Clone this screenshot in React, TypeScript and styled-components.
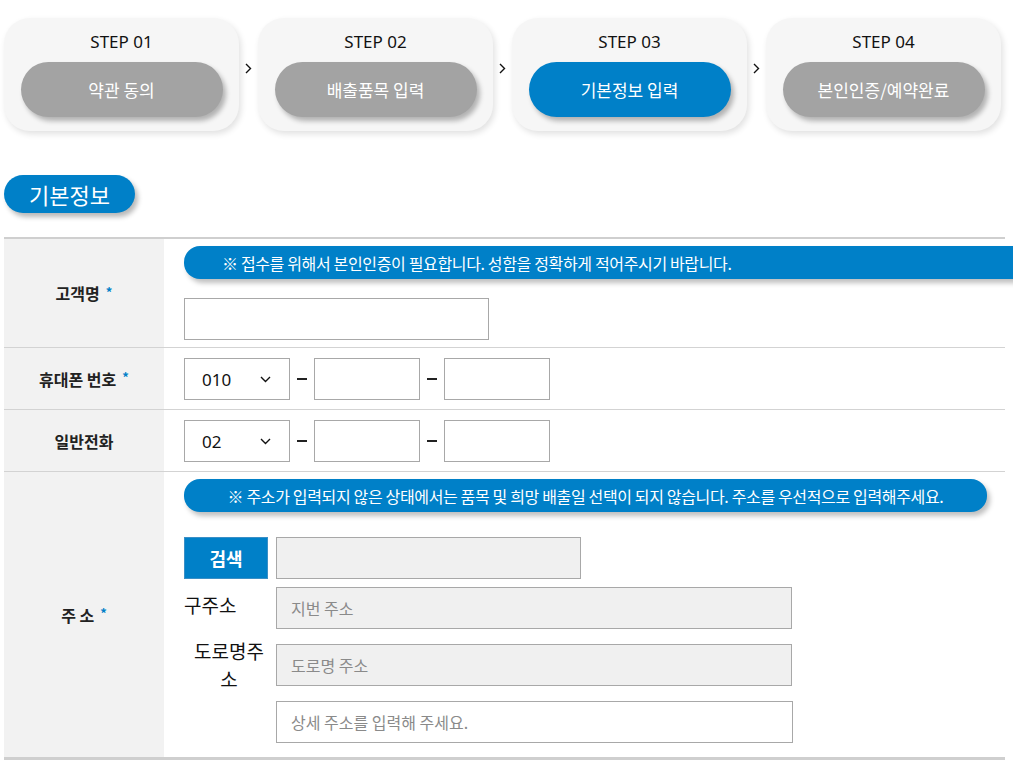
import React from "react";
import styled, { createGlobalStyle } from "styled-components";

const Global = createGlobalStyle`
  html, body { margin: 0; padding: 0; background: #fff; overflow-x: hidden; }
  body { font-family: "Noto Sans CJK KR", "Noto Sans", sans-serif; color: #222; }
  * { box-sizing: border-box; }
`;

const Page = styled.div`
  width: 1013px;
  padding: 18px 0 0 4px;
  overflow: hidden;
`;

const Steps = styled.div`
  display: flex;
  align-items: center;
`;

const StepCard = styled.div`
  width: 235px;
  height: 113px;
  border-radius: 26px;
  background: #f6f6f6;
  box-shadow: 2px 3px 6px rgba(0, 0, 0, 0.12);
  display: flex;
  flex-direction: column;
  align-items: center;
  padding-top: 12px;
`;

const StepTitle = styled.div`
  font-family: "Noto Sans", "Noto Sans CJK KR", sans-serif;
  font-size: 17px;
  line-height: 24px;
  color: #111;
  margin-bottom: 8px;
`;

const StepPill = styled.div<{ $active?: boolean }>`
  width: 202px;
  height: 55px;
  border-radius: 28px;
  background: ${(p) => (p.$active ? "#0080c8" : "#a3a3a3")};
  color: #fff;
  font-size: 17px;
  display: flex;
  align-items: center;
  justify-content: center;
  box-shadow: 3px 4px 5px rgba(0, 0, 0, 0.28);
`;

const Arrow = styled.div`
  width: 19px;
  display: flex;
  justify-content: center;
  padding-bottom: 12px;
`;

const SectionBadge = styled.div`
  margin-top: 44px;
  width: 131px;
  height: 38px;
  border-radius: 19px;
  background: #0080c8;
  color: #fff;
  font-size: 22px;
  font-weight: 400;
  display: flex;
  align-items: center;
  justify-content: center;
  box-shadow: 3px 4px 5px rgba(0, 0, 0, 0.28);
`;

const Table = styled.div`
  margin-top: 24px;
  width: 1001px;
  border-top: 2px solid #cfcfcf;
  border-bottom: 3px solid #cfcfcf;
`;

const Row = styled.div<{ $last?: boolean }>`
  display: grid;
  grid-template-columns: 160px 1fr;
  border-bottom: ${(p) => (p.$last ? "none" : "1px solid #d3d3d3")};
`;

const Label = styled.div`
  background: #f2f2f2;
  display: flex;
  align-items: center;
  justify-content: center;
  font-size: 16px;
  font-weight: 700;
  color: #222;
`;

const Star = styled.span`
  color: #0080c8;
  font-size: 13px;
  margin-left: 6px;
  position: relative;
  top: -2px;
`;

const Cell = styled.div<{ $pad?: string }>`
  padding: ${(p) => p.$pad || "10px 0 9px 20px"};
  display: flex;
  flex-direction: column;
  align-items: flex-start;
`;

const Notice = styled.div<{ $w: number; $center?: boolean; $open?: boolean }>`
  width: ${(p) => p.$w}px;
  height: 33px;
  border-radius: ${(p) => (p.$open ? "16px 0 0 16px" : "16px")};
  background: #0080c8;
  color: #fff;
  font-size: 16px;
  letter-spacing: -0.35px;
  display: flex;
  align-items: center;
  justify-content: ${(p) => (p.$center ? "center" : "flex-start")};
  padding-left: ${(p) => (p.$center ? "0" : "38px")};
  box-shadow: 3px 4px 5px rgba(0, 0, 0, 0.25);
  flex-shrink: 0;
  white-space: nowrap;
`;

const Spacer = styled.div<{ $h: number }>`
  height: ${(p) => p.$h}px;
`;

const TextBox = styled.div<{ $w: number; $grey?: boolean }>`
  width: ${(p) => p.$w}px;
  height: 42px;
  border: 1px solid #a8a8a8;
  background: ${(p) => (p.$grey ? "#f0f0f0" : "#fff")};
  color: #8a8a8a;
  font-size: 16px;
  display: flex;
  align-items: center;
  padding-left: 14px;
  flex-shrink: 0;
`;

const PhoneLine = styled.div`
  display: flex;
  align-items: center;
`;

const Select = styled.div`
  width: 106px;
  height: 42px;
  border: 1px solid #a8a8a8;
  display: flex;
  align-items: center;
  justify-content: space-between;
  padding: 0 18px 0 17px;
  font-family: "Noto Sans", sans-serif;
  font-size: 17px;
  color: #111;
`;

const Dash = styled.div`
  width: 24px;
  display: flex;
  justify-content: center;
  &::before {
    content: "";
    width: 10px;
    height: 2px;
    background: #222;
  }
`;

const SearchLine = styled.div`
  display: flex;
  gap: 8px;
  margin-top: 25px;
`;

const SearchButton = styled.div`
  width: 84px;
  height: 42px;
  background: #0080c8;
  color: #fff;
  font-size: 18px;
  font-weight: 700;
  display: flex;
  align-items: center;
  justify-content: center;
  border: 1px solid #3a8fc6;
`;

const AddrGrid = styled.div`
  display: grid;
  grid-template-columns: 92px 516px;
  row-gap: 8px;
  align-items: center;
  margin-top: 8px;
`;

const AddrLabel = styled.div<{ $center?: boolean }>`
  font-size: 19px;
  line-height: 28px;
  color: #111;
  width: ${(p) => (p.$center ? "86px" : "auto")};
  text-align: ${(p) => (p.$center ? "center" : "left")};
  padding: ${(p) => (p.$center ? "0 0 0 4px" : "0 0 6px 0")};
  word-break: break-all;
`;

const Chevron = () => (
  <svg width="7" height="11" viewBox="0 0 7 11">
    <path d="M1 1 L5.5 5.5 L1 10" fill="none" stroke="#111" strokeWidth="1.4" />
  </svg>
);

const Down = () => (
  <svg width="11" height="7" viewBox="0 0 11 7">
    <path d="M1 1 L5.5 5.5 L10 1" fill="none" stroke="#111" strokeWidth="1.4" />
  </svg>
);

const steps = [
  { n: "STEP 01", t: "약관 동의" },
  { n: "STEP 02", t: "배출품목 입력" },
  { n: "STEP 03", t: "기본정보 입력", active: true },
  { n: "STEP 04", t: "본인인증/예약완료" },
];

const Phone = ({ prefix }: { prefix: string }) => (
  <PhoneLine>
    <Select>
      <span>{prefix}</span>
      <Down />
    </Select>
    <Dash />
    <TextBox $w={106} />
    <Dash />
    <TextBox $w={106} />
  </PhoneLine>
);

export default function App() {
  return (
    <Page>
      <Global />
      <Steps>
        {steps.map((s, i) => (
          <React.Fragment key={s.n}>
            {i > 0 && (
              <Arrow>
                <Chevron />
              </Arrow>
            )}
            <StepCard>
              <StepTitle>{s.n}</StepTitle>
              <StepPill $active={s.active}>{s.t}</StepPill>
            </StepCard>
          </React.Fragment>
        ))}
      </Steps>

      <SectionBadge>기본정보</SectionBadge>

      <Table>
        <Row>
          <Label>
            고객명<Star>*</Star>
          </Label>
          <Cell $pad="7px 0 7px 20px">
            <Notice $w={850} $open>
              ※ 접수를 위해서 본인인증이 필요합니다. 성함을 정확하게 적어주시기 바랍니다.
            </Notice>
            <Spacer $h={19} />
            <TextBox $w={305} />
          </Cell>
        </Row>
        <Row>
          <Label>
            휴대폰 번호<Star>*</Star>
          </Label>
          <Cell>
            <Phone prefix="010" />
          </Cell>
        </Row>
        <Row>
          <Label>일반전화</Label>
          <Cell>
            <Phone prefix="02" />
          </Cell>
        </Row>
        <Row $last>
          <Label>
            주 소<Star>*</Star>
          </Label>
          <Cell $pad="7px 0 14px 20px">
            <Notice $w={803} $center>
              ※ 주소가 입력되지 않은 상태에서는 품목 및 희망 배출일 선택이 되지 않습니다. 주소를 우선적으로 입력해주세요.
            </Notice>
            <SearchLine>
              <SearchButton>검색</SearchButton>
              <TextBox $w={305} $grey />
            </SearchLine>
            <AddrGrid>
              <AddrLabel>구주소</AddrLabel>
              <TextBox $w={516} $grey>
                지번 주소
              </TextBox>
              <AddrLabel $center>도로명주소</AddrLabel>
              <TextBox $w={516} $grey>
                도로명 주소
              </TextBox>
              <span />
              <TextBox $w={517}>상세 주소를 입력해 주세요.</TextBox>
            </AddrGrid>
          </Cell>
        </Row>
      </Table>
    </Page>
  );
}
